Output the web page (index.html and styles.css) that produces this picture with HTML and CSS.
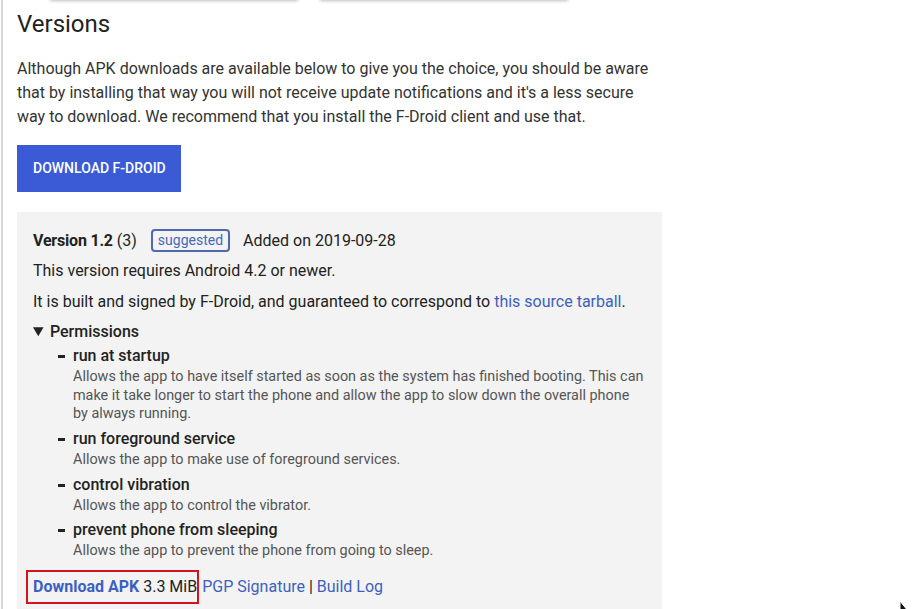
FILE: index.html
```html
<!DOCTYPE html>
<html>
<head>
<meta charset="utf-8">
<link rel="stylesheet" href="styles.css">
</head>
<body>
<div class="page">
  <div class="cards">
    <div class="card"></div>
    <div class="card"></div>
  </div>
  <h2 class="title">Versions</h2>
  <p class="intro">Although APK downloads are available below to give you the choice, you should be aware that by installing that way you will not receive update notifications and it's a less secure way to download. We recommend that you install the F-Droid client and use that.</p>
  <a class="btn" href="#">Download F-Droid</a>
  <div class="version">
    <div class="vhead">
      <span><b>Version 1.2</b> (3)</span>
      <span class="badge">suggested</span>
      <span>Added on 2019-09-28</span>
    </div>
    <p class="vline">This version requires Android 4.2 or newer.</p>
    <p class="vline">It is built and signed by F-Droid, and guaranteed to correspond to <a href="#">this source tarball</a>.</p>
    <details open class="perms">
      <summary>Permissions</summary>
      <ul class="plist">
        <li><div class="pname">run at startup</div><div class="pdesc">Allows the app to have itself started as soon as the system has finished booting. This can make it take longer to start the phone and allow the app to slow down the overall phone by always running.</div></li>
        <li><div class="pname">run foreground service</div><div class="pdesc">Allows the app to make use of foreground services.</div></li>
        <li><div class="pname">control vibration</div><div class="pdesc">Allows the app to control the vibrator.</div></li>
        <li><div class="pname">prevent phone from sleeping</div><div class="pdesc">Allows the app to prevent the phone from going to sleep.</div></li>
      </ul>
    </details>
    <div class="dl"><span class="hl"><a class="apk" href="#">Download APK</a> 3.3 MiB</span><a href="#">PGP Signature</a> | <a href="#">Build Log</a></div>
  </div>
</div>
<svg class="cursor" width="12" height="10" viewBox="0 0 12 10"><path d="M1 0 L1 10 L9 10 Z" fill="#111" stroke="#fff" stroke-width="1"/></svg>
</body>
</html>
```
FILE: styles.css
```css
html, body {
  margin: 0;
  padding: 0;
  background: #fff;
  overflow: hidden;
}
body {
  font-family: Roboto, "Liberation Sans", sans-serif;
  color: #222;
  width: 918px;
  height: 609px;
  position: relative;
}
.page {
  margin-left: 1px;
  border-left: 2px solid #d6d6d6;
  padding-left: 14px;
  width: 645px;
  min-height: 609px;
}
.cards {
  display: flex;
  gap: 22px;
  margin-left: 33px;
  margin-top: -20px;
  height: 20px;
}
.card {
  width: 248px;
  height: 20px;
  background: #fff;
  box-shadow: 0 1px 3px rgba(0,0,0,0.25);
}
.title {
  font-size: 24px;
  font-weight: 400;
  line-height: 28px;
  margin: 10px 0 19px;
  color: #222;
}
.intro {
  font-size: 16px;
  line-height: 24px;
  color: #333;
  margin: 0 0 16px;
}
.btn {
  display: inline-block;
  background: #3a5bd5;
  color: #fff;
  text-transform: uppercase;
  font-size: 14px;
  font-weight: 500;
  text-decoration: none;
  padding: 0 15px 0 16px;
  height: 47px;
  line-height: 47px;
  margin-bottom: 20px;
}
a { color: #3d5fc0; text-decoration: none; }
.version {
  background: #f3f3f3;
  padding: 16px 16px 20px;
  font-size: 16px;
  color: #222;
}
.vhead {
  display: flex;
  align-items: center;
  gap: 14px;
  height: 24px;
  margin-bottom: 7px;
}
.vhead b { font-weight: 700; letter-spacing: -0.2px; }
.badge {
  border: 2px solid #4e6aae;
  border-radius: 4px;
  color: #4769b8;
  font-size: 14px;
  padding: 0 5px;
  height: 19px;
  line-height: 19px;
  margin-right: -1px;
}
.vline {
  margin: 0 0 6.5px;
  line-height: 24px;
}
.perms summary {
  line-height: 24px;
  font-weight: 500;
  cursor: pointer;
}
.plist {
  list-style: none;
  margin: 0;
  padding: 0 0 0 40px;
}
.plist li {
  position: relative;
  margin-bottom: 3.3px;
}
.plist li::before {
  content: "";
  position: absolute;
  left: -15px;
  top: 11px;
  width: 7px;
  height: 3px;
  background: #222;
}
.pname {
  font-weight: 500;
  line-height: 24px;
}
.pdesc {
  font-size: 14.4px;
  line-height: 18.5px;
  color: #555;
}
.dl {
  margin-top: 9px;
  line-height: 24px;
}
.hl {
  display: inline-block;
  border: 2px solid #d4141c;
  padding: 3px 0 3px 5px;
  margin-left: -7px;
  margin-right: 3px;
  line-height: 24px;
}
.apk { font-weight: 700; }
.cursor {
  position: absolute;
  left: 899px;
  top: 601px;
}
```
